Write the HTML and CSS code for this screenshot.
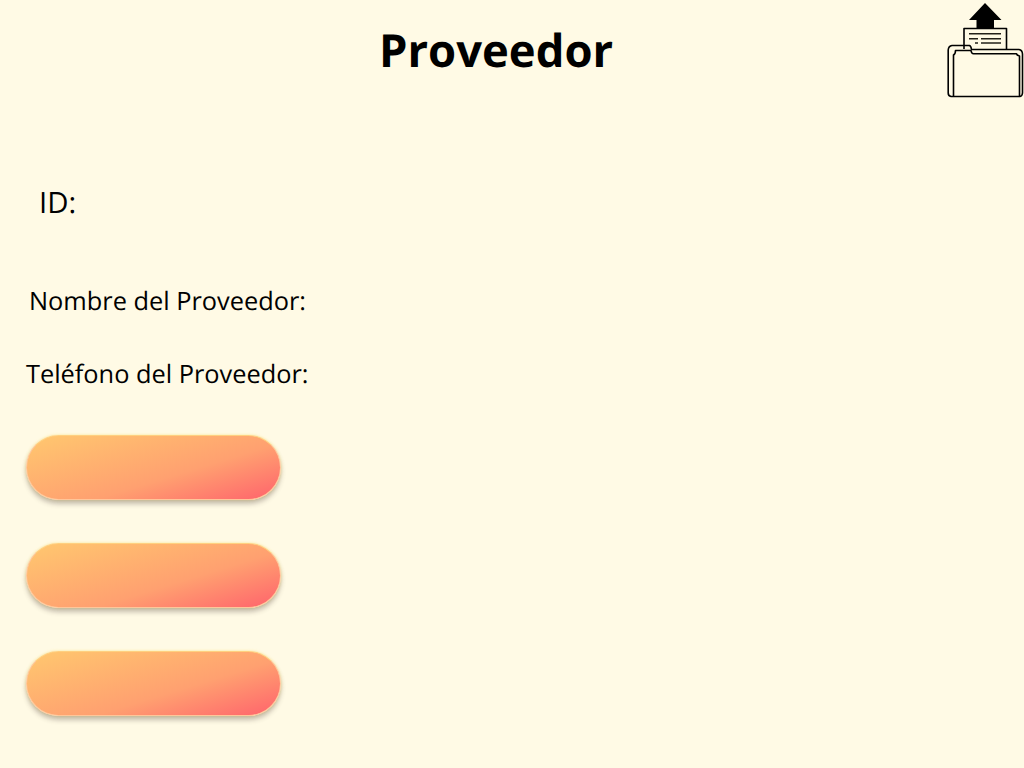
FILE: index.html
```html
<!DOCTYPE html>
<html lang="es">
<head>
<meta charset="utf-8">
<title>Proveedor</title>
<link rel="stylesheet" href="styles.css">
</head>
<body>
<header class="header">
  <h1 class="title">Proveedor</h1>
  <svg class="folder-icon" viewBox="0 0 84 104" width="84" height="104" fill="none" stroke="#000" stroke-width="1.6" stroke-linejoin="round" aria-hidden="true">
    <path d="M24 49V28.500H66.500V49"/>
    <path d="M45 3L61.500 20H54V28.500H36.500V20H29Z" fill="#000" stroke="none"/>
    <path d="M29 33.700H61M29 38.700H38M41 38.700H61M35 43H38M41 43H61" stroke="#222018" stroke-width="1.600"/>
    <path d="M11 96.500Q8.200 96 8.200 93V50Q8.500 46 12 45.500H29.500Q31 46 31.500 49.500H79Q82.300 50 82.500 54V93Q82.300 96 80 96.500Z"/>
    <path d="M13.500 96V55Q15.500 54 15.500 50.500H31Q31.500 53.700 33.500 53.700H76.500Q77 55.500 79.500 56V96"/>
  </svg>
</header>
<main class="content">
  <p class="label label-id">ID:</p>
  <p class="label label-name">Nombre del Proveedor:</p>
  <p class="label label-phone">Teléfono del Proveedor:</p>
  <div class="actions">
    <button class="pill" type="button"></button>
    <button class="pill" type="button"></button>
    <button class="pill" type="button"></button>
  </div>
</main>
</body>
</html>
```
FILE: styles.css
```css
* { box-sizing: border-box; }
body {
  margin: 0;
  height: 768px;
  overflow: hidden;
  background: #fffae5;
  color: #000;
  font-family: "Open Sans", "Noto Sans", sans-serif;
  text-rendering: geometricPrecision;
}
.header {
  display: flex;
  justify-content: space-between;
  height: 104px;
  padding-left: 379px;
}
.title {
  margin: 19px 0 0;
  font-size: 45.4px;
  line-height: 62px;
  font-weight: 700;
}
.folder-icon { display: block; }
.content {
  display: flex;
  flex-direction: column;
  align-items: flex-start;
  padding: 78px 26px 0;
}
.label {
  margin: 0;
  font-size: 25.35px;
  line-height: 36px;
  white-space: nowrap;
}
.label-id {
  padding-left: 13px;
  font-size: 29.3px;
  line-height: 40px;
}
.label-name {
  margin-top: 61px;
  padding-left: 3px;
}
.label-phone { margin-top: 37px; }
.actions {
  display: flex;
  flex-direction: column;
  gap: 43px;
  margin-top: 43px;
}
.pill {
  width: 255px;
  height: 65px;
  padding: 0;
  border: 1px solid #ffc69a;
  border-top-color: #ffd080;
  border-radius: 33px;
  background: linear-gradient(163deg, #ffc56f 5%, #ffa070 60%, #ff666c 97%) border-box;
  box-shadow: 0 4px 5px rgba(70, 60, 55, 0.32), 0 0 3px rgba(255, 230, 120, 0.7);
}
```
